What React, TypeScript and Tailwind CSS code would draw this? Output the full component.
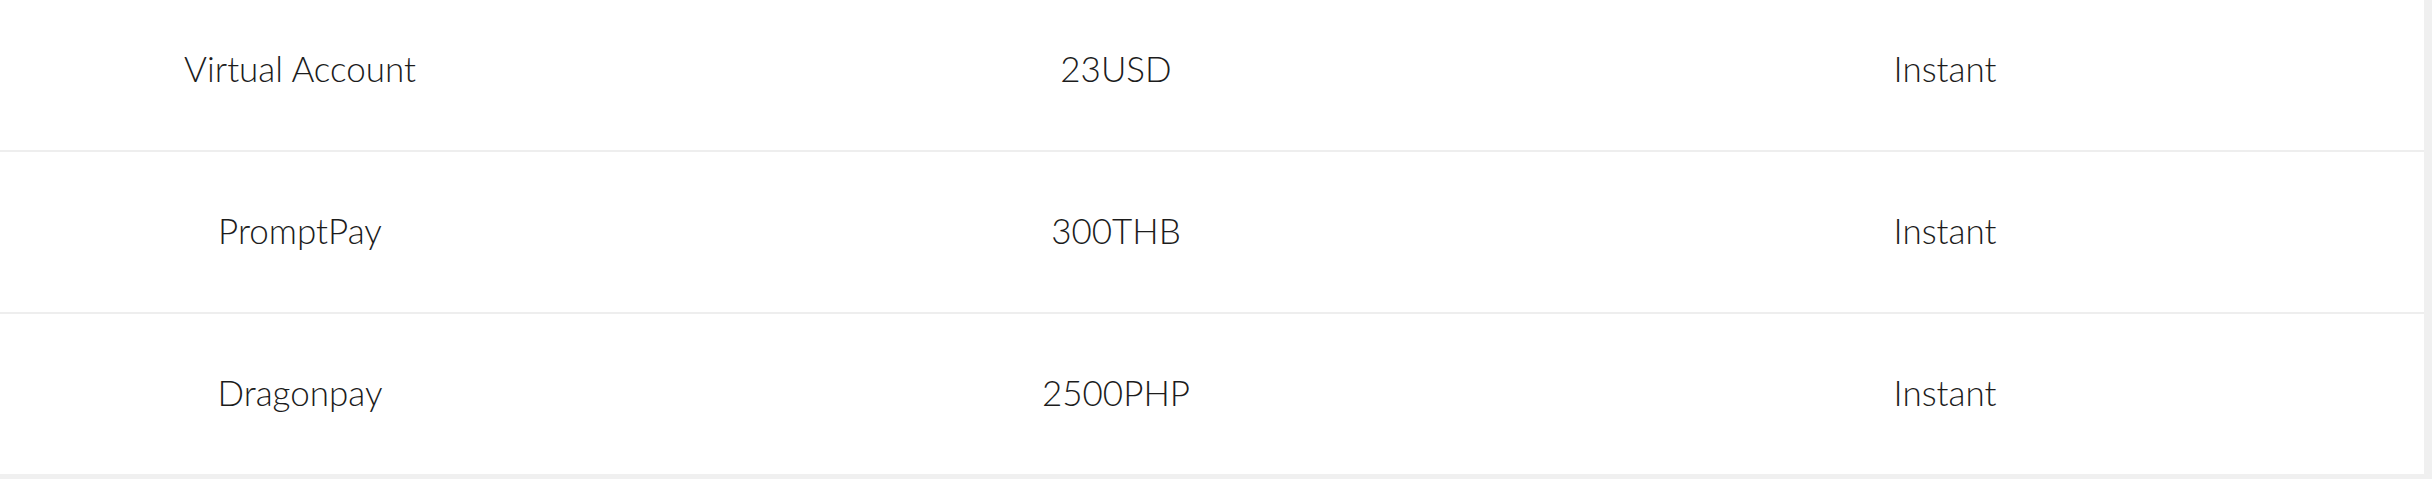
const ROWS = [
  { method: "Virtual Account", min: "23USD", time: "Instant" },
  { method: "PromptPay", min: "300THB", time: "Instant" },
  { method: "Dragonpay", min: "2500PHP", time: "Instant" },
];

export default function App() {
  return (
    <div className="h-[479px] w-[2432px] overflow-hidden bg-[#f0f0f0] font-['Lato',sans-serif] font-light text-[#1c1c1c]">
      <div className="-mt-[10px] w-[2424px] bg-white">
        {ROWS.map((r, i) => (
          <div
            key={r.method}
            className={`grid grid-cols-[600px_1032px_626px_1fr] items-center bg-white pb-[4px] text-center text-[35px] ${
              i < ROWS.length - 1 ? "h-[162px] border-b-2 border-[#eeeeee]" : "h-[160px]"
            }`}
          >
            <div>{r.method}</div>
            <div>{r.min}</div>
            <div>{r.time}</div>
            <div />
          </div>
        ))}
      </div>
    </div>
  );
}
